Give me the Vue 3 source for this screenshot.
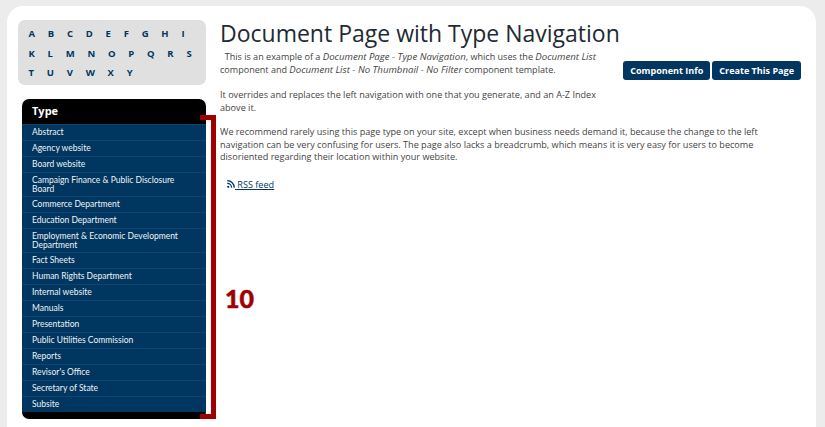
<script setup>
const letters = 'ABCDEFGHIKLMNOPQRSTUVWXY'.split('')
const items = ['Abstract','Agency website','Board website','Campaign Finance & Public Disclosure Board','Commerce Department','Education Department','Employment & Economic Development Department','Fact Sheets','Human Rights Department','Internal website','Manuals','Presentation','Public Utilities Commission','Reports',"Revisor's Office",'Secretary of State','Subsite']
</script>

<template>
  <div class="page">
    <div class="card">
      <aside class="side">
        <div class="az">
          <a v-for="l in letters" :key="l" class="letter">{{ l }}</a>
        </div>
        <nav class="nav">
          <div class="nav-head">Type</div>
          <ul class="nav-list">
            <li v-for="i in items" :key="i" class="nav-item">{{ i }}</li>
          </ul>
          <div class="nav-foot"></div>
        </nav>
      </aside>
      <main class="main">
        <h1 class="title">Document Page with Type Navigation</h1>
        <div class="top">
          <p class="intro">&nbsp; This is an example of a <em>Document Page - Type Navigation</em>, which uses the <em>Document List</em> component and <em>Document List - No Thumbnail - No Filter</em> component template.</p>
          <div class="btns">
            <a class="btn">Component Info</a>
            <a class="btn">Create This Page</a>
          </div>
        </div>
        <p class="p2">It overrides and replaces the left navigation with one that you generate, and an A-Z Index above it.</p>
        <p class="p3">We recommend rarely using this page type on your site, except when business needs demand it, because the change to the left navigation can be very confusing for users. The page also lacks a breadcrumb, which means it is very easy for users to become disoriented regarding their location within your website.</p>
        <a class="rss">
          <svg class="rss-icon" viewBox="0 0 10 10" width="8" height="8"><circle cx="1.5" cy="8.5" r="1.4" fill="#003660"/><path d="M0.3 4.2a5.5 5.5 0 0 1 5.5 5.5M0.3 0.9a8.8 8.8 0 0 1 8.8 8.8" fill="none" stroke="#003660" stroke-width="1.6"/></svg><span> RSS feed</span>
        </a>
      </main>
    </div>
    <div class="bracket"></div>
    <div class="callout">10</div>
  </div>
</template>

<style scoped>
.page {
  position: relative;
  width: 825px;
  height: 427px;
  overflow: hidden;
  background: #ececec;
  padding: 6px 9px 0 7px;
  box-sizing: border-box;
  font-family: "Open Sans", sans-serif;
}
.card {
  display: flex;
  background: #fff;
  border-radius: 16px 16px 0 0;
  height: 440px;
  padding: 14px 0 0 11px;
  box-sizing: border-box;
}
.side {
  width: 188px;
  flex: none;
}
.az {
  display: flex;
  flex-wrap: wrap;
  align-content: flex-start;
  height: 65px;
  padding: 4px 6px 0 4px;
  box-sizing: border-box;
  background: #e0e0e0;
  border-radius: 7px;
}
.letter {
  height: 19.5px;
  padding: 0 6.4px;
  line-height: 19.5px;
  font-size: 9.5px;
  font-weight: 700;
  color: #003660;
}
.nav {
  margin: 14px 0 0 4px;
  background: #000;
  border-radius: 7px;
  overflow: hidden;
}
.nav-head {
  height: 25px;
  line-height: 24px;
  padding-left: 10px;
  font-size: 11px;
  font-weight: 700;
  color: #fff;
}
.nav-list {
  list-style: none;
  margin: 0;
  padding: 0;
  background: #003660;
}
.nav-item {
  padding: 3px 10px 2px;
  font-family: Lato, sans-serif;
  font-size: 8.5px;
  line-height: 9px;
  min-height: 10px;
  color: #eef3f6;
  border-top: 1px solid #0a4470;
  box-sizing: content-box;
}
.nav-foot {
  height: 7px;
}
.main {
  flex: 1;
  padding: 0 15px 0 14px;
  min-width: 0;
}
.title {
  margin: 0;
  font-size: 23px;
  line-height: 26px;
  font-weight: 400;
  color: #1f2a33;
}
.top {
  display: flex;
  justify-content: space-between;
  margin-top: 5px;
}
.intro {
  width: 390px;
  margin: 0;
  font-size: 9.05px;
  line-height: 12.6px;
  color: #444;
}
.intro em {
  font-size: 9.65px;
}
.btns {
  display: flex;
  gap: 2px;
  margin-top: 10px;
  height: 19px;
}
.btn {
  padding: 0 7px;
  line-height: 19px;
  font-size: 9.05px;
  font-weight: 700;
  color: #fff;
  background: #003660;
  border-radius: 3px;
  white-space: nowrap;
}
.p2, .p3 {
  margin: 12px 0 0;
  font-size: 9.1px;
  line-height: 12.6px;
  color: #444;
}
.p2 { width: 390px; margin-top: 9px; }
.rss {
  display: block;
  margin: 14px 0 0 7px;
  font-size: 9.1px;
  line-height: 13px;
  color: #003660;
}
.rss span { text-decoration: underline; white-space: pre; }
.bracket {
  position: absolute;
  left: 200px;
  top: 115px;
  width: 11px;
  height: 294px;
  border: solid #a00000;
  border-width: 5px 5px 5px 0;
}
.callout {
  position: absolute;
  left: 225px;
  top: 283px;
  font-family: Lato, sans-serif;
  font-size: 25px;
  line-height: 30px;
  font-weight: 900;
  -webkit-text-stroke: 0.5px #a00000;
  color: #a00000;
}
</style>
